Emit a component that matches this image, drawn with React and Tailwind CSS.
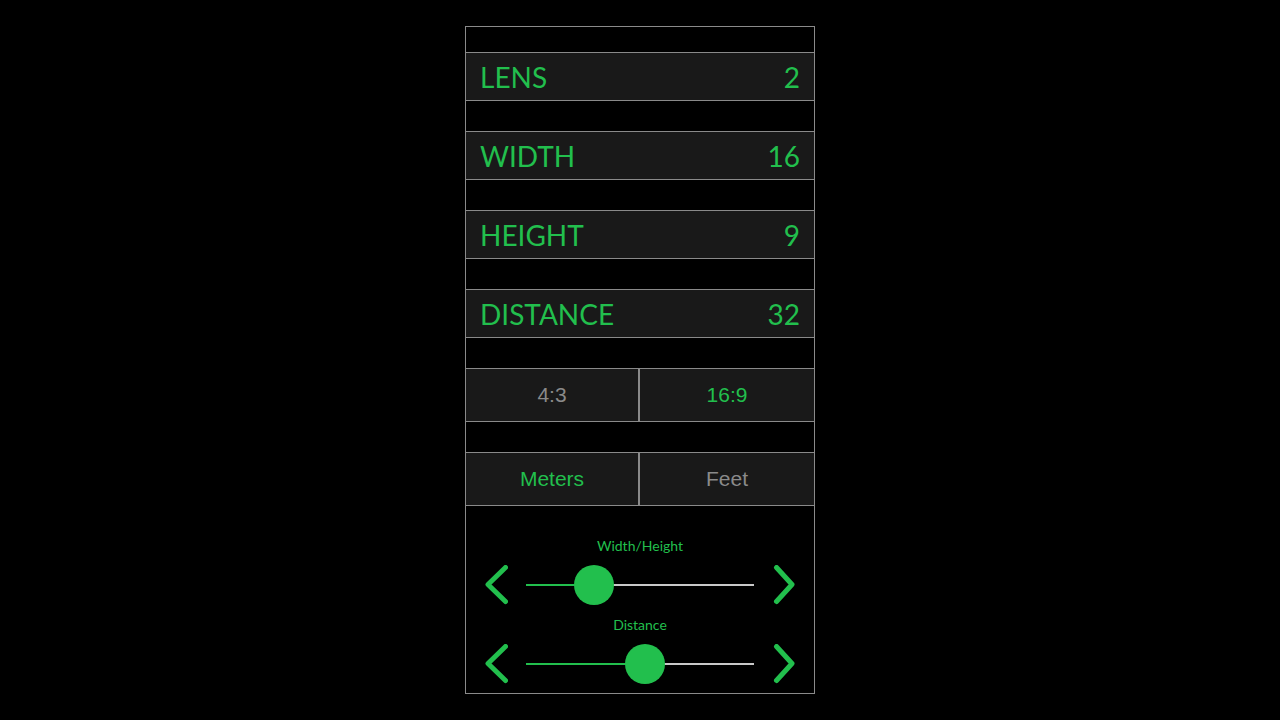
import React from 'react';

const GREEN = 'text-[#22bf4d]';

const ValueRow = ({ label, value }) => (
  <div className="h-[49px] border-y border-[#8a8a8a] bg-[#191919] flex items-center justify-between pl-[14px] pr-[14px]">
    <span className={`${GREEN} text-[28px] leading-none`}>{label}</span>
    <span className={`${GREEN} text-[28px] leading-none`}>{value}</span>
  </div>
);

const Toggle = ({ options, active }) => (
  <div className="h-[54px] border-y border-[#8a8a8a] bg-[#191919] grid grid-cols-2 font-['Liberation_Sans',Arial,sans-serif] text-[21px]">
    {options.map((opt, i) => (
      <div
        key={opt}
        className={`flex items-center justify-center ${i === 0 ? 'border-r-2 border-[#8a8a8a]' : ''} ${
          opt === active ? GREEN : 'text-[#8a8a8a]'
        }`}
      >
        {opt}
      </div>
    ))}
  </div>
);

const Chevron = ({ dir }) => (
  <svg width="24" height="40" viewBox="0 0 24 40" className="shrink-0">
    <path
      d={dir === 'left' ? 'M21.5 2.5 L4 19.5 L21.5 36.5' : 'M4.5 2.5 L20 19.5 L4.5 36.5'}
      fill="none"
      stroke="#22bf4d"
      strokeWidth="5"
      strokeLinecap="round"
      strokeLinejoin="round"
    />
  </svg>
);

// custom slider: offset is the thumb centre in px from the track start
const Slider = ({ label, offset }) => (
  <div className="flex flex-col items-center">
    <span className={`${GREEN} text-[14px] leading-4`}>{label}</span>
    <div className="mt-[11px] flex items-center gap-[18px]">
      <Chevron dir="left" />
      <div className="relative w-[228px] h-10 flex items-center">
        <div className="h-[2px] bg-[#22bf4d]" style={{ width: offset }}></div>
        <div className="h-[2px] flex-1 bg-[#c8c8c8]"></div>
        <div
          className="absolute top-0 w-10 h-10 rounded-full bg-[#22bf4d]"
          style={{ left: offset - 20 }}
        ></div>
      </div>
      <Chevron dir="right" />
    </div>
  </div>
);

const App = () => {
  return (
    <div className="min-h-screen bg-black pt-[26px] font-['Lato',sans-serif]">
      <div className="mx-auto w-[350px] border border-[#8a8a8a] flex flex-col">
        <div className="h-[25px]"></div>
        <ValueRow label="LENS" value="2" />
        <div className="h-[30px]"></div>
        <ValueRow label="WIDTH" value="16" />
        <div className="h-[30px]"></div>
        <ValueRow label="HEIGHT" value="9" />
        <div className="h-[30px]"></div>
        <ValueRow label="DISTANCE" value="32" />
        <div className="h-[30px]"></div>
        <Toggle options={['4:3', '16:9']} active="16:9" />
        <div className="h-[30px]"></div>
        <Toggle options={['Meters', 'Feet']} active="Meters" />

        {/* sliders */}
        <div className="pt-[32px] pb-[9px] flex flex-col gap-[12px]">
          <Slider label="Width/Height" offset={68} />
          <Slider label="Distance" offset={119} />
        </div>
      </div>
    </div>
  );
};

export default App;
